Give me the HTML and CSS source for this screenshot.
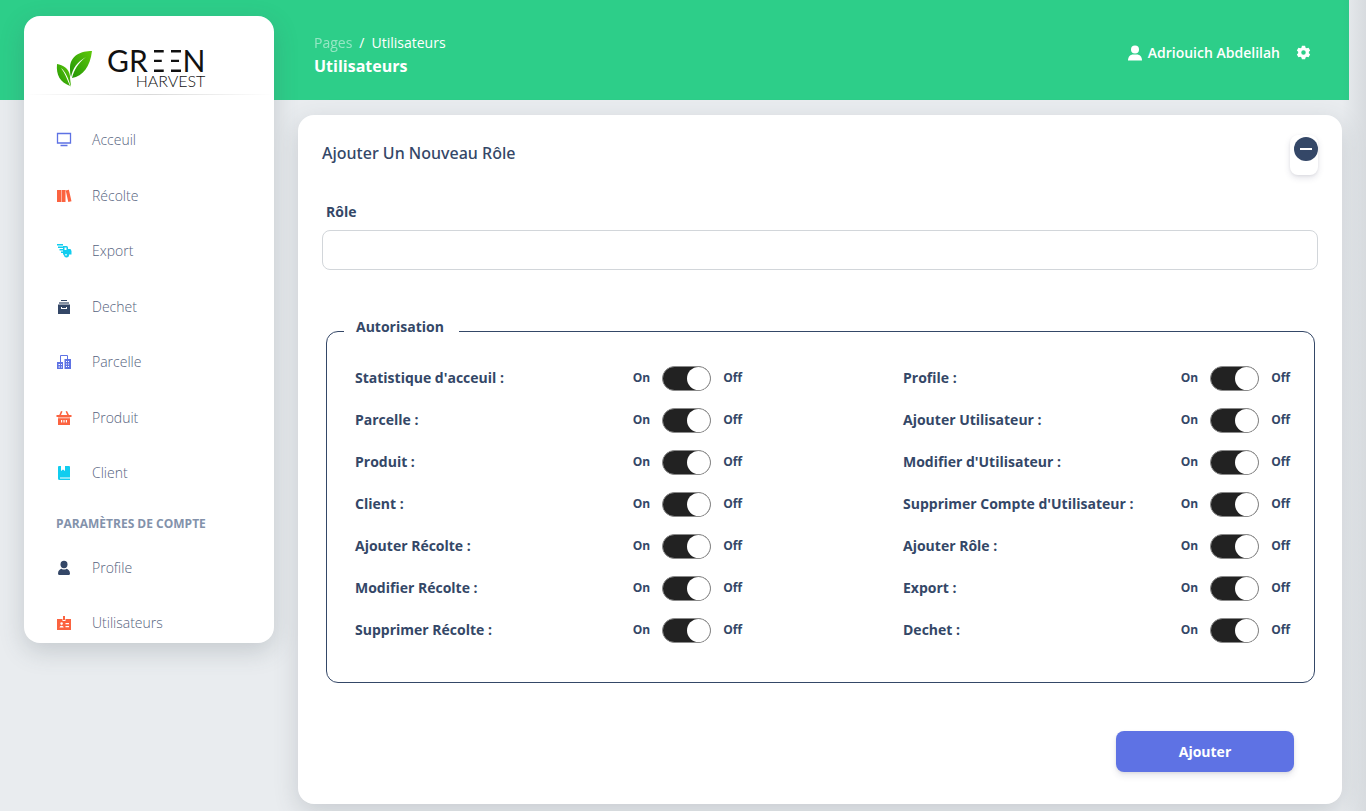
FILE: index.html
```html
<!DOCTYPE html>
<html lang="fr">
<head>
<meta charset="utf-8">
<meta name="viewport" content="width=device-width, initial-scale=1">
<title>Utilisateurs - Green Harvest</title>
<link rel="stylesheet" href="styles.css">
</head>
<body>
<div class="page">
  <aside class="sidebar">
    <a class="brand" href="#">
      <svg class="brand-leaf" viewBox="0 0 36 38" aria-hidden="true">
        <defs><linearGradient id="leaf" x1="0" y1="1" x2="1" y2="0"><stop offset="0" stop-color="#1f9405"/><stop offset="1" stop-color="#60c80b"/></linearGradient></defs>
        <path fill="url(#leaf)" d="M36 1C25 1 15 5 14 17c0 4 0 7 1 10 2-9 6-15 15-20-8 6-12 13-14 21 11-2 18-11 20-27z"/>
        <path fill="url(#leaf)" d="M1 14c6 1 12 4 13 12 0 4 1 8 1 11C12 28 10 22 5 18c4 5 6 11 9 18C4 32 0 25 1 14z"/>
      </svg>
      <span class="brand-name">
        <span class="brand-top">GR<span class="bars">E</span><span class="bars">E</span>N</span>
        <span class="brand-sub">HARVEST</span>
      </span>
    </a>
    <hr class="divider">
    <nav class="nav">
      <div class="nav-group nav-main">
        <a class="nav-link" href="#"><svg class="icon indigo" viewBox="0 0 16 16"><path fill="none" stroke="currentColor" stroke-width="1.300" d="M1.500 1.500h13v9.500h-13zM4.500 13.500h7"/></svg>Acceuil</a>
        <a class="nav-link" href="#"><svg class="icon orange" viewBox="0 0 16 16"><path d="M1 2h4v12H1zM5.500 2h4v12h-4zM9.700 2.500l3.200-.7L15.500 13.200l-3.200.8z"/></svg>Récolte</a>
        <a class="nav-link" href="#"><svg class="icon cyan" viewBox="0 0 16 16"><path d="M1 1h6v1.400H1zM2 3.500h5v1.400H2zM3.500 6H7v1.400H3.500zM5 8.500h2v1.400H5z"/><path fill-rule="evenodd" d="M7 3h3.500q1.500 0 1.500 1.500V6h2.500l1 2v3.500H13a2.500 2.500 0 0 1-5 1L7 11zM8.500 4.500V7h2V4.500zM9.300 11v1.500h1.400V11z"/></svg>Export</a>
        <a class="nav-link" href="#"><svg class="icon navy" viewBox="0 0 16 16"><path d="M5 1h6v1H5z"/><path opacity=".6" d="M3 3h10v2H3z"/><path fill-rule="evenodd" d="M2 5.500h12V15H2zM5 8v2h6V8h-1v1H6V8z"/></svg>Dechet</a>
        <a class="nav-link" href="#"><svg class="icon indigo" viewBox="0 0 16 16"><path fill="none" stroke="currentColor" d="M4.500 8V1.500h7V6"/><path fill-rule="evenodd" d="M1 8h6v7H1zM2.500 10v1H4v-1zM5 10v1h1v-1zM2.500 12.500v1H4v-1zM5 12.500v1h1v-1zM8.500 5H15v10H8.500zM10 7v1h1V7zM12 7v1h1V7zM10 9.500v1h1v-1zM12 9.500v1h1v-1zM10 12v1h1v-1zM12 12v1h1v-1z"/></svg>Parcelle</a>
        <a class="nav-link" href="#"><svg class="icon orange" viewBox="0 0 16 16"><path d="M5 1l1.500.5L5 5h10.500v2H.5V5H3.300zM11 1l2 4h-1.800L9.600 1.500z"/><path opacity=".5" d="M2 7h12v1.200H2z"/><path fill-rule="evenodd" d="M2 8.200h12V15H2zM5 10v2.500h1.200V10zM7.400 10v2.500h1.200V10zM9.800 10v2.500H11V10z"/></svg>Produit</a>
        <a class="nav-link" href="#"><svg class="icon cyan" viewBox="0 0 16 16"><path d="M3 1h2v5l2-1.500L9 6V1h4q1 0 1 1v10.500H4v1h10V15H3.500Q2 15 2 13.500V2q0-1 1-1z"/></svg>Client</a>
      </div>
      <h2 class="nav-title">Paramètres de compte</h2>
      <div class="nav-group nav-account">
        <a class="nav-link" href="#"><svg class="icon navy" viewBox="0 0 16 16"><ellipse cx="8" cy="4.500" rx="3.500" ry="3.700"/><path d="M2 13.500C2 10.500 4 9 5.500 8.700Q8 10.500 10.500 8.700C12 9 14 10.500 14 13.500Q14 15 12.500 15h-9Q2 15 2 13.500z"/></svg>Profile</a>
        <a class="nav-link" href="#"><svg class="icon orange" viewBox="0 0 16 16"><path fill-rule="evenodd" d="M1 4h5.500v2h3V4H15v11H1zM4.300 8.600a1.300 1.300 0 1 0 2.600 0 1.300 1.300 0 0 0-2.600 0zM3.500 12.500h4.200q-.2-1.700-2.100-1.700t-2.100 1.700zM9.500 8v1.200H13V8zM9.500 11v1.200H13V11z"/><path d="M7 1h2v4H7z"/></svg>Utilisateurs</a>
      </div>
    </nav>
  </aside>

  <main class="main">
    <header class="topbar">
      <div>
        <nav class="crumbs" aria-label="Fil d'Ariane"><a href="#">Pages</a><span>/</span><span>Utilisateurs</span></nav>
        <h1 class="page-title">Utilisateurs</h1>
      </div>
      <div class="user">
        <a class="user-link" href="#"><svg class="user-icon" viewBox="0 0 14 16" aria-hidden="true"><circle cx="7" cy="4.500" r="4"/><path d="M0 15.500c0-4 2.500-6 5-6h4c2.500 0 5 2 5 6z"/></svg>Adriouich Abdelilah</a>
        <button class="gear" type="button" aria-label="Paramètres"><svg class="gear-icon" viewBox="0 0 16 16"><path fill-rule="evenodd" d="M6.300.8h3.400l.5 2 1.200.7 2-.6 1.700 3L13.700 7.300v1.400l1.400 1.400-1.700 3-2-.6-1.200.7-.5 2H6.300l-.5-2-1.200-.7-2 .6-1.700-3 1.400-1.400V7.300L.9 5.900l1.700-3 2 .6 1.200-.7zM5.600 8a2.400 2.400 0 1 0 4.800 0 2.400 2.400 0 0 0-4.800 0z"/></svg></button>
      </div>
    </header>

    <form class="card">
      <div class="card-head">
        <h2 class="card-title">Ajouter Un Nouveau Rôle</h2>
        <button class="collapse" type="button" aria-label="Réduire"><svg class="collapse-icon" viewBox="0 0 24 24"><circle cx="12" cy="12" r="12" fill="#344767"/><path d="M6 12h12" stroke="#fff" stroke-width="2"/></svg></button>
      </div>
      <label class="field-label" for="role">Rôle</label>
      <input class="field" id="role" type="text">
      <fieldset class="rights">
        <legend class="legend">Autorisation</legend>
        <div class="rights-grid">
          <div class="right"><label for="r1">Statistique d'acceuil :</label><span class="state">On</span><input class="switch" id="r1" type="checkbox" checked><span class="state">Off</span></div>
          <div class="right"><label for="r2">Profile :</label><span class="state">On</span><input class="switch" id="r2" type="checkbox" checked><span class="state">Off</span></div>
          <div class="right"><label for="r3">Parcelle :</label><span class="state">On</span><input class="switch" id="r3" type="checkbox" checked><span class="state">Off</span></div>
          <div class="right"><label for="r4">Ajouter Utilisateur :</label><span class="state">On</span><input class="switch" id="r4" type="checkbox" checked><span class="state">Off</span></div>
          <div class="right"><label for="r5">Produit :</label><span class="state">On</span><input class="switch" id="r5" type="checkbox" checked><span class="state">Off</span></div>
          <div class="right"><label for="r6">Modifier d'Utilisateur :</label><span class="state">On</span><input class="switch" id="r6" type="checkbox" checked><span class="state">Off</span></div>
          <div class="right"><label for="r7">Client :</label><span class="state">On</span><input class="switch" id="r7" type="checkbox" checked><span class="state">Off</span></div>
          <div class="right"><label for="r8">Supprimer Compte d'Utilisateur :</label><span class="state">On</span><input class="switch" id="r8" type="checkbox" checked><span class="state">Off</span></div>
          <div class="right"><label for="r9">Ajouter Récolte :</label><span class="state">On</span><input class="switch" id="r9" type="checkbox" checked><span class="state">Off</span></div>
          <div class="right"><label for="r10">Ajouter Rôle :</label><span class="state">On</span><input class="switch" id="r10" type="checkbox" checked><span class="state">Off</span></div>
          <div class="right"><label for="r11">Modifier Récolte :</label><span class="state">On</span><input class="switch" id="r11" type="checkbox" checked><span class="state">Off</span></div>
          <div class="right"><label for="r12">Export :</label><span class="state">On</span><input class="switch" id="r12" type="checkbox" checked><span class="state">Off</span></div>
          <div class="right"><label for="r13">Supprimer Récolte :</label><span class="state">On</span><input class="switch" id="r13" type="checkbox" checked><span class="state">Off</span></div>
          <div class="right"><label for="r14">Dechet :</label><span class="state">On</span><input class="switch" id="r14" type="checkbox" checked><span class="state">Off</span></div>
        </div>
      </fieldset>
      <div class="actions"><button class="submit" type="submit">Ajouter</button></div>
    </form>
  </main>
</div>
</body>
</html>
```
FILE: styles.css
```css
* { box-sizing: border-box; }

body {
  margin: 0;
  background: #e9ecef;
  color: #344767;
  font-family: "Open Sans", "Noto Sans", sans-serif;
  font-size: 14px;
  line-height: 20px;
}

a { color: inherit; text-decoration: none; }
h1, h2 { margin: 0; }
button, input { font: inherit; color: inherit; }
button { border: 0; cursor: pointer; }

.page {
  display: flex;
  align-items: flex-start;
  gap: 24px;
  min-height: 100vh;
  padding: 0 24px 7px;
  background:
    linear-gradient(90deg, transparent calc(100% - 24px), rgba(60, 70, 80, .1)),
    linear-gradient(#2dce89, #2dce89) 0 0 / calc(100% - 17px) 100px no-repeat;
}

/* Sidebar */
.sidebar {
  flex: 0 0 250px;
  height: calc(100vh - 184px);
  margin-top: 16px;
  overflow: hidden;
  border-radius: 16px;
  background: #fff;
  box-shadow: 0 8px 24px rgba(70, 80, 90, .22);
}

.brand {
  display: flex;
  align-items: center;
  gap: 15px;
  height: 78px;
  padding: 28px 32px 0;
  color: #111;
  font-family: Lato, sans-serif;
}
.brand-leaf { width: 36px; height: 38px; }
.brand-name { display: flex; flex-direction: column; align-items: flex-end; }
.brand-top { font-size: 30px; line-height: 24px; }
.brand-sub { font-size: 16px; line-height: 18px; font-weight: 300; }
.bars {
  color: transparent;
  background: linear-gradient(90deg, transparent 6px, #111 6px);
  background-clip: text;
}

.divider {
  height: 1px;
  margin: 0;
  border: 0;
  background: linear-gradient(90deg, transparent, rgba(0, 0, 0, .15), transparent);
}

.nav { padding: 25px 32px 0; }
.nav-group { display: flex; flex-direction: column; justify-content: space-between; }
.nav-main { height: 373px; }
.nav-account { height: 95px; margin-top: 14px; }
.nav-link {
  display: flex;
  align-items: center;
  gap: 20px;
  height: 40px;
  color: #56637e;
  font-weight: 300;
}
.nav-title {
  margin-top: 21px;
  color: #8392ab;
  font-size: 12px;
  line-height: 20px;
  font-weight: 700;
  text-transform: uppercase;
}
.icon { flex: none; width: 16px; height: 16px; fill: currentColor; }
.indigo { color: #5e72e4; }
.orange { color: #fb6340; }
.cyan { color: #11cdef; }
.navy { color: #344767; }

/* Main column */
.main { flex: 1; min-width: 0; }

.topbar {
  display: flex;
  justify-content: space-between;
  align-items: center;
  height: 115px;
  padding: 0 31px 4px 16px;
  color: #fff;
}
.crumbs { display: flex; gap: 7px; line-height: 21px; }
.crumbs a { opacity: .5; }
.page-title { font-size: 16px; line-height: 26px; font-weight: 700; }
.user { display: flex; align-items: center; gap: 16px; margin-bottom: 6px; font-weight: 600; }
.user-link { display: flex; align-items: center; gap: 6px; }
.user-icon { width: 14px; height: 16px; fill: currentColor; }
.gear { display: flex; padding: 0; background: none; color: #fff; }
.gear-icon { width: 15px; height: 15px; fill: currentColor; }

.card {
  padding: 20px 24px 32px;
  border-radius: 16px;
  background: #fff;
  box-shadow: 0 8px 24px rgba(70, 80, 90, .2);
}
.card-head { display: flex; justify-content: space-between; align-items: flex-start; }
.card-title {
  padding-top: 6px;
  font-family: "Noto Sans", "Open Sans", sans-serif;
  font-size: 16px;
  line-height: 24px;
  font-weight: 500;
}
.collapse {
  display: flex;
  justify-content: flex-end;
  width: 28px;
  height: 40px;
  padding: 2px 0;
  border-radius: 8px;
  background: #fff;
  box-shadow: 0 3px 6px rgba(50, 50, 93, .13), 0 1px 3px rgba(0, 0, 0, .06);
}
.collapse-icon { flex: none; width: 24px; height: 24px; }
.field-label { display: block; margin: 27px 4px 8px; font-weight: 700; }
.field {
  display: block;
  width: 100%;
  height: 40px;
  padding: 8px 12px;
  border: 1px solid #d2d6da;
  border-radius: 8px;
  background: #fff;
}

.rights {
  min-width: 0;
  margin: 47px 3px 0 4px;
  padding: 0 24px 31px 28px;
  border: 1px solid #344767;
  border-radius: 12px;
}
.legend { margin-left: -11px; padding: 0 15px 8px 12px; font-weight: 700; }
.rights-grid {
  display: grid;
  grid-template-columns: 1fr 1fr;
  column-gap: 161px;
  padding-top: 12px;
}
.right { display: flex; align-items: center; height: 42px; font-weight: 700; }
.right label { flex: 1; }
.state { font-size: 12px; }

.switch {
  appearance: none;
  display: flex;
  justify-content: flex-start;
  width: 49px;
  height: 25px;
  margin: 0 12px;
  border: 1px solid #8a8a8a;
  border-radius: 13px;
  background: #222;
  cursor: pointer;
}
.switch::before {
  content: "";
  width: 23px;
  height: 23px;
  border-radius: 50%;
  background: #fff;
}
.switch:checked { justify-content: flex-end; }

.actions { display: flex; justify-content: flex-end; padding: 48px 24px 0; }
.submit {
  width: 178px;
  height: 41px;
  border-radius: 8px;
  background: #5e72e4;
  color: #fff;
  font-weight: 700;
  box-shadow: 0 4px 6px rgba(50, 50, 93, .11), 0 1px 3px rgba(0, 0, 0, .08);
}

@media (max-width: 900px) {
  .page { flex-direction: column; }
  .sidebar { flex-basis: auto; width: 100%; height: auto; }
  .main { width: 100%; }
  .rights-grid { grid-template-columns: 1fr; }
}
```
